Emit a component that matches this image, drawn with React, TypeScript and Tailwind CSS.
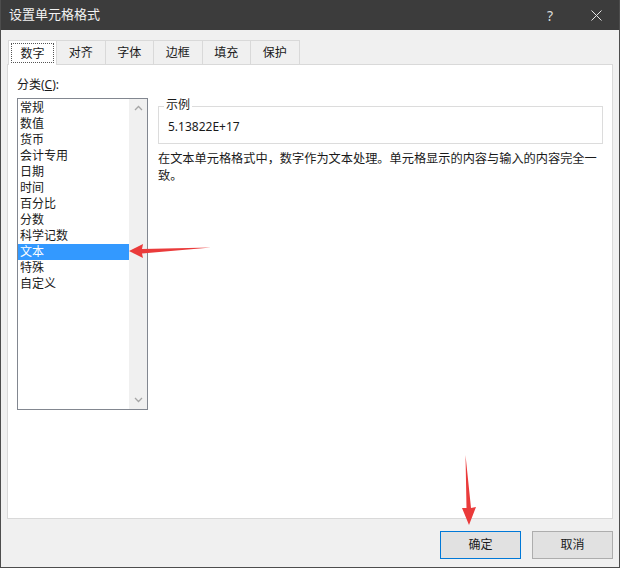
import React from "react";

const categories = [
  "常规",
  "数值",
  "货币",
  "会计专用",
  "日期",
  "时间",
  "百分比",
  "分数",
  "科学记数",
  "文本",
  "特殊",
  "自定义",
];

const tabs = ["数字", "对齐", "字体", "边框", "填充", "保护"];

const font = {
  fontFamily: '"Noto Sans", "Noto Sans CJK SC", sans-serif',
};

function Arrows() {
  // red annotation arrows drawn over the dialog
  return (
    <svg
      className="absolute inset-0 pointer-events-none"
      width={620}
      height={568}
      viewBox="0 0 620 568"
    >
      <path d="M128 251 L142 244 L141 249 L210 247.5 L141 253.5 L142 258 Z" fill="#ea3b3b" />
      <path d="M464.5 455 L470 508 L475 507 L468 525 L461 508 L465.5 508 Z" fill="#ea3b3b" />
    </svg>
  );
}

export default function App() {
  return (
    <div
      className="relative w-[620px] h-[568px] flex flex-col bg-[#f0f0f0] border-x border-b border-[#4d4d4d] text-[12px] text-[#1a1a1a] overflow-hidden"
      style={font}
    >
      {/* title bar */}
      <div className="h-[30px] shrink-0 bg-[#3c3c3c] flex items-center pl-[8px] text-[13px] text-[#f2f2f2]">
        <span className="flex-1">设置单元格格式</span>
        <span className="w-[20px] text-center text-[14px] text-[#dcdcdc] mr-[31px]">?</span>
        <svg width="11" height="11" viewBox="0 0 11 11" className="mr-[17px]">
          <path d="M0.5 0.5 L10.5 10.5 M10.5 0.5 L0.5 10.5" stroke="#e6e6e6" strokeWidth="1" />
        </svg>
      </div>

      <div className="flex-1 flex flex-col px-[6px] pt-[10px]">
        {/* tabs */}
        <div className="flex pl-[1px] h-[24px]">
          {tabs.map((t, i) =>
            i === 0 ? (
              <div
                key={t}
                className="w-[49px] h-[25px] bg-white border border-b-0 border-[#d9d9d9] p-[2px] relative z-10"
              >
                <div className="h-full border border-dotted border-[#555] flex items-center justify-center pt-[1px]">
                  {t}
                </div>
              </div>
            ) : (
              <div
                key={t}
                className="w-[48.5px] h-[24px] border border-l-0 border-b-0 border-[#d9d9d9] flex items-center justify-center pt-[1px]"
              >
                {t}
              </div>
            )
          )}
        </div>

        {/* tab panel */}
        <div className="h-[455px] bg-white border border-[#d9d9d9] flex pl-[9px] pt-[12px] pr-[9px] gap-[10px]">
          <div className="flex flex-col w-[131px] shrink-0">
            <div className="h-[16px] leading-[16px]">
              分类(<span className="underline">C</span>):
            </div>
            <div className="mt-[5px] h-[312px] border border-[#828790] flex">
              <div className="flex-1 pt-[1px]">
                {categories.map((c) => (
                  <div
                    key={c}
                    className={
                      "h-[16px] leading-[16px] pl-[2px] " +
                      (c === "文本" ? "bg-[#3399ff] text-white" : "")
                    }
                  >
                    {c}
                  </div>
                ))}
              </div>
              <div className="w-[18px] bg-[#f0f0f0] flex flex-col justify-between items-center py-[6px]">
                <svg width="9" height="6" viewBox="0 0 9 6">
                  <path d="M1 5 L4.5 1.5 L8 5" stroke="#a6a6a6" strokeWidth="1.3" fill="none" />
                </svg>
                <svg width="9" height="6" viewBox="0 0 9 6">
                  <path d="M1 1 L4.5 4.5 L8 1" stroke="#a6a6a6" strokeWidth="1.3" fill="none" />
                </svg>
              </div>
            </div>
          </div>

          <div className="flex-1 min-w-0 flex flex-col pt-[29px]">
            <div className="relative h-[38px] border border-[#dcdcdc] flex items-center pl-[9px] pt-[4px]">
              <span className="absolute -top-[10px] left-[5px] bg-white px-[2px] leading-[16px]">
                示例
              </span>
              5.13822E+17
            </div>
            <p className="mt-[6px] text-[12.2px] leading-[17px] whitespace-nowrap">
              在文本单元格格式中，数字作为文本处理。单元格显示的内容与输入的内容完全一
              <br />
              致。
            </p>
          </div>
        </div>

        {/* buttons */}
        <div className="flex justify-end gap-[11px] pt-[12px]">
          <button className="w-[81px] h-[28px] bg-[#e1e1e1] border border-[#0078d7]">确定</button>
          <button className="w-[81px] h-[28px] bg-[#e1e1e1] border border-[#adadad]">取消</button>
        </div>
      </div>

      <Arrows />
    </div>
  );
}
